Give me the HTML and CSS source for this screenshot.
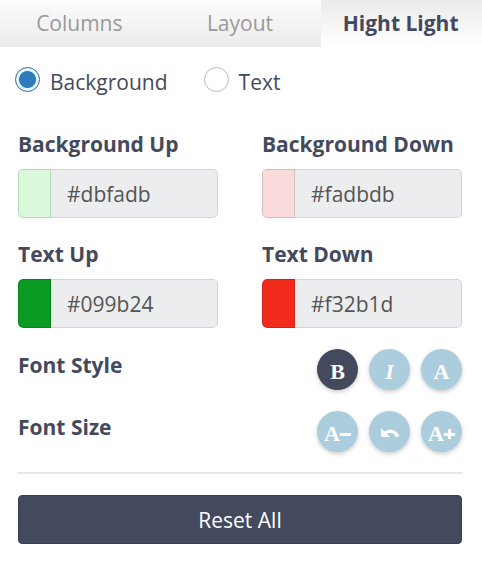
FILE: index.html
```html
<!DOCTYPE html>
<html lang="en">
<head>
  <meta charset="UTF-8">
  <meta name="viewport" content="width=device-width, initial-scale=1">
  <title>Hight Light</title>
  <link rel="stylesheet" href="styles.css">
</head>
<body>

<nav class="tabs">
  <button type="button" class="tab">Columns</button>
  <button type="button" class="tab">Layout</button>
  <button type="button" class="tab active">Hight Light</button>
</nav>

<form class="panel">
  <div class="modes">
    <label class="mode"><input type="radio" name="mode" value="background" checked><span>Background</span></label>
    <label class="mode"><input type="radio" name="mode" value="text"><span>Text</span></label>
  </div>

  <div class="colors">
    <div class="field">
      <label for="bgUp">Background Up</label>
      <div class="color-box">
        <span class="swatch bg-up"></span>
        <input type="text" id="bgUp" value="#dbfadb">
      </div>
    </div>
    <div class="field">
      <label for="bgDown">Background Down</label>
      <div class="color-box">
        <span class="swatch bg-down"></span>
        <input type="text" id="bgDown" value="#fadbdb">
      </div>
    </div>
    <div class="field">
      <label for="textUp">Text Up</label>
      <div class="color-box">
        <span class="swatch text-up"></span>
        <input type="text" id="textUp" value="#099b24">
      </div>
    </div>
    <div class="field">
      <label for="textDown">Text Down</label>
      <div class="color-box">
        <span class="swatch text-down"></span>
        <input type="text" id="textDown" value="#f32b1d">
      </div>
    </div>
  </div>

  <div class="option" role="group" aria-labelledby="fontStyle">
    <span class="option-name" id="fontStyle">Font Style</span>
    <div class="rounds">
      <button type="button" class="round selected" aria-label="Bold">B</button>
      <button type="button" class="round italic" aria-label="Italic">I</button>
      <button type="button" class="round" aria-label="Normal">A</button>
    </div>
  </div>

  <div class="option" role="group" aria-labelledby="fontSize">
    <span class="option-name" id="fontSize">Font Size</span>
    <div class="rounds">
      <button type="button" class="round" aria-label="Smaller">A<svg class="sign" viewBox="0 0 11 11"><path d="M0 5h11v3H0z"/></svg></button>
      <button type="button" class="round" aria-label="Reset size">
        <svg class="undo" viewBox="0 0 20 12"><path d="M1 0v9h9L6.800 5.800C10.300 3.500 14.500 5 16.200 9.300L19.200 8.300C17 1.500 9.800 0 4.500 3.500z"/></svg>
      </button>
      <button type="button" class="round" aria-label="Larger">A<svg class="sign" viewBox="0 0 11 11"><path d="M4 1h3v4h4v3H7v3H4V8H0V5h4z"/></svg></button>
    </div>
  </div>

  <hr>
  <button type="reset" class="reset">Reset All</button>
</form>

</body>
</html>
```
FILE: styles.css
```css
* {
  box-sizing: border-box;
}

body {
  margin: 0;
  background: #fff;
  color: #434a5d;
  font-family: "Open Sans", sans-serif;
  font-size: 21px;
  line-height: 28px;
}

button, input {
  font: inherit;
}

.tabs {
  display: grid;
  grid-template-columns: repeat(3, 1fr);
}

.tab {
  height: 47px;
  padding: 0 2px 2px 0;
  border: 0;
  background: linear-gradient(#fcfcfc, #ebebeb);
  color: #999;
  cursor: pointer;
}

.tab.active {
  background: linear-gradient(#ebebeb, #fff);
  color: #434a5d;
  font-weight: bold;
}

.panel {
  padding: 20px 20px 28px 18px;
}

.modes {
  display: flex;
  gap: 36px;
  margin-left: -3px;
}

.mode {
  display: flex;
  gap: 10px;
}

.mode span {
  padding-top: 1px;
}

.mode input {
  appearance: none;
  width: 25px;
  height: 25px;
  margin: 0;
  border: 1px solid #bbb;
  border-radius: 50%;
  background: #fff;
}

.mode input:checked {
  border-color: #2f6ca5;
  background: radial-gradient(circle, #2e7abc 8px, #e6f8ff 9px);
}

.colors {
  display: grid;
  grid-template-columns: repeat(2, minmax(0, 1fr));
  gap: 22px 44px;
  margin-top: 34px;
}

.field label,
.option-name {
  display: block;
  font-weight: bold;
}

.color-box {
  display: flex;
  height: 49px;
  margin-top: 11px;
  overflow: hidden;
  border-radius: 5px;
  background: #ecedee;
}

.swatch {
  width: 33px;
  flex: none;
  border: 1px solid rgba(0, 0, 0, 0.15);
  border-radius: 5px 0 0 5px;
}

.color-box input {
  flex: 1;
  min-width: 0;
  padding: 0 16px;
  border: 1px solid #d2d3d4;
  border-left: 0;
  border-radius: 0 5px 5px 0;
  background: none;
  color: #555;
}

.bg-up {
  background: #dbfadb;
}

.bg-down {
  background: #fadbdb;
}

.text-up {
  background: #099b24;
}

.text-down {
  background: #f32b1d;
}

.option {
  display: flex;
  justify-content: space-between;
  margin-top: 21px;
}

.option-name {
  padding-top: 2px;
}

.rounds {
  display: flex;
  gap: 11px;
}

.round {
  display: flex;
  align-items: center;
  justify-content: center;
  width: 41px;
  height: 41px;
  padding: 4px 0 0;
  border: 0;
  border-radius: 50%;
  background: #accddd;
  box-shadow: 0 2px 4px rgba(0, 0, 0, 0.2);
  color: #fff;
  font-family: "Liberation Serif", serif;
  font-size: 22px;
  font-weight: bold;
  cursor: pointer;
}

.round.selected {
  background: #434a5d;
}

.round.italic {
  font-style: italic;
}

.round svg {
  fill: #fff;
}

.sign {
  width: 11px;
  height: 11px;
}

.undo {
  width: 20px;
  height: 12px;
}

hr {
  margin: 20px 0 21px;
  border: 0;
  border-top: 2px solid #e6e6e6;
}

.reset {
  width: 100%;
  height: 49px;
  border: 1px solid #394053;
  border-radius: 4px;
  background: #434a5d;
  color: #fff;
  cursor: pointer;
}
```
